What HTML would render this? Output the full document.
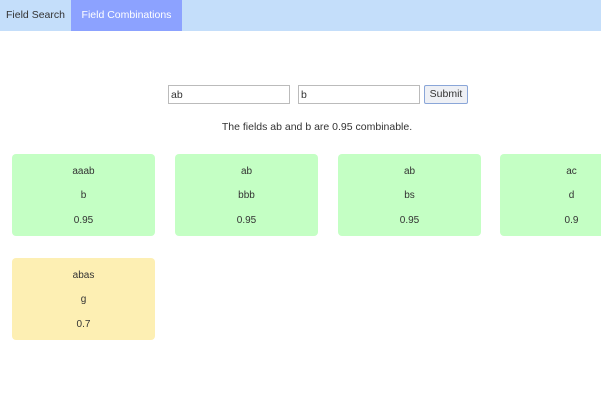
<!DOCTYPE html><html><head><style>
body{margin:0;width:601px;height:402px;background:#fff;font-family:"Liberation Sans",sans-serif;color:#333;overflow:hidden;position:relative}
.nav{position:absolute;left:0;top:0;width:601px;height:31px;background:#c4defa}
.tab{position:absolute;top:0;height:31px;line-height:31px;font-size:10.5px;text-align:center}
input{position:absolute;top:85px;height:19px;box-sizing:border-box;border:1px solid #bbb;font:10.5px "Liberation Sans",sans-serif;padding:0 2px;color:#333}
.btn{position:absolute;left:424px;top:85px;width:44px;height:19px;box-sizing:border-box;border:1px solid #8aa6d8;background:#eef0f5;font-size:10.5px;text-align:center;line-height:17px;border-radius:2px}
.msg{position:absolute;top:121px;left:0;width:634px;text-align:center;font-size:10.5px}
.card{position:absolute;width:143px;height:82px;border-radius:4px;background:#c4ffc4;font-size:10px;text-align:center}
.card div{position:absolute;left:0;width:100%}
</style></head><body>
<div class="nav"><div class="tab" style="left:0;width:71px">Field Search</div><div class="tab" style="left:71px;width:111px;background:#8ca2ff;color:#fff">Field Combinations</div></div>
<input style="left:168px;width:122px" value="ab"><input style="left:298px;width:122px" value="b"><div class="btn">Submit</div>
<div class="msg">The fields ab and b are 0.95 combinable.</div>
<div class="card" style="left:12px;top:154px"><div style="top:12px">aaab</div><div style="top:36px">b</div><div style="top:61px">0.95</div></div>
<div class="card" style="left:175px;top:154px"><div style="top:12px">ab</div><div style="top:36px">bbb</div><div style="top:61px">0.95</div></div>
<div class="card" style="left:338px;top:154px"><div style="top:12px">ab</div><div style="top:36px">bs</div><div style="top:61px">0.95</div></div>
<div class="card" style="left:500px;top:154px"><div style="top:12px">ac</div><div style="top:36px">d</div><div style="top:61px">0.9</div></div>
<div class="card" style="left:12px;top:258px;background:#fdefb3"><div style="top:12px">abas</div><div style="top:36px">g</div><div style="top:61px">0.7</div></div>
</body></html>
